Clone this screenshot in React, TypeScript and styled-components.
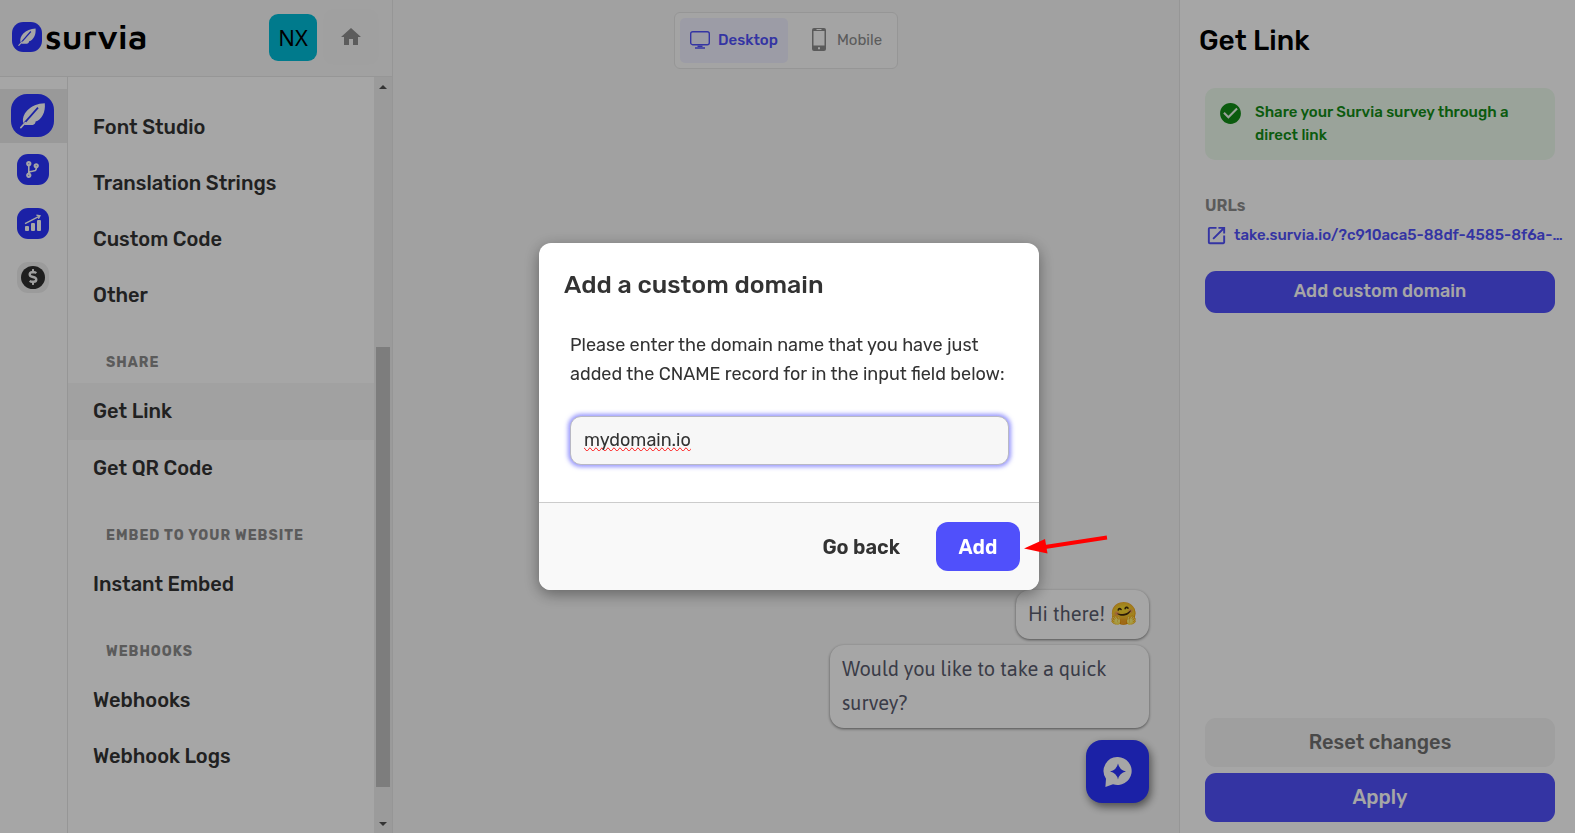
import React from "react";
import styled, { createGlobalStyle } from "styled-components";
import { FaCodeBranch, FaDollarSign } from "react-icons/fa";
import { MdCheckCircle, MdHome, MdOpenInNew } from "react-icons/md";

const GlobalStyle = createGlobalStyle`
  *, *::before, *::after { box-sizing: border-box; }
  body { margin: 0; font-family: Rubik, Roboto, "Noto Sans", sans-serif; color: #333; }
  button, input { font: inherit; color: inherit; }
  button { border: 0; padding: 0; background: none; cursor: pointer; }
  a { color: inherit; text-decoration: none; }
  svg { display: block; flex: none; }
`;

const colors = { brand: "#2a34ff", accent: "#5050fb", line: "#e6e6e6" };

/* ---------- shell ---------- */

const Shell = styled.div`
  display: grid;
  grid-template-columns: 393px minmax(0, 1fr) 396px;
  height: 100vh;
  background: #f8f8f8;
`;

const Sidebar = styled.aside`
  display: flex;
  flex-direction: column;
  min-height: 0;
  border-right: 1px solid ${colors.line};
`;

const SidebarHeader = styled.header`
  display: flex;
  align-items: center;
  height: 77px;
  padding: 0 13px 2px 12px;
  border-bottom: 1px solid ${colors.line};
`;

const Brand = styled.a`
  display: flex;
  align-items: center;
  gap: 3px;
  margin-right: auto;
  color: #000;
`;

const BrandName = styled.span`
  padding-bottom: 3px;
  font: 600 35px/40px "Maven Pro", Roboto, sans-serif;
`;

const Avatar = styled.button`
  width: 48px;
  height: 47px;
  border-radius: 9px;
  background: #00bcd7;
  color: #000;
  font: 400 22px/47px "Noto Sans", sans-serif;
`;

const HomeButton = styled.button`
  display: grid;
  place-items: center;
  width: 56px;
  height: 56px;
  margin-left: 6px;
  border-radius: 10px;
  background: #f6f6f6;
  color: #8e8e8e;
`;

const SidebarBody = styled.div`
  display: flex;
  flex: 1;
  min-height: 0;
  background: #fff;
`;

const Rail = styled.nav`
  width: 68px;
  padding-top: 12px;
  border-right: 1px solid ${colors.line};
`;

const RailItem = styled.button<{ $active?: boolean }>`
  display: grid;
  place-items: center;
  width: 100%;
  height: 54px;
  padding: 0 2px 2px 0;
  background: ${(p) => (p.$active ? "#ebebeb" : "transparent")};
`;

const RailTile = styled.span<{ $muted?: boolean }>`
  display: grid;
  place-items: center;
  width: 32px;
  height: 31px;
  border-radius: 11px;
  background: ${(p) => (p.$muted ? "#efefef" : colors.brand)};
  color: #fff;
`;

const Coin = styled.span`
  display: grid;
  place-items: center;
  width: 24px;
  height: 23px;
  border-radius: 50%;
  background: #303030;
  color: #f4f4f4;
`;

const Menu = styled.nav`
  flex: 1;
  overflow: hidden;
`;

const MenuList = styled.div`
  display: flex;
  flex-direction: column;
  margin-top: -36px;
`;

const MenuItem = styled.a<{ $active?: boolean }>`
  padding: 14px 25px ${(p) => (p.$active ? 15 : 14)}px;
  font-size: 20px;
  font-weight: 500;
  line-height: 28px;
  background: ${(p) => (p.$active ? "#f7f7f7" : "transparent")};

  &:first-child {
    margin-bottom: 2px;
  }
`;

const MenuLabel = styled.h2`
  margin: 0;
  padding: 30px 38px 10px;
  font-size: 14px;
  font-weight: 700;
  line-height: 20px;
  letter-spacing: 1px;
  color: #8c8c8c;
`;

const ScrollTrack = styled.div`
  display: flex;
  flex-direction: column;
  align-items: center;
  width: 18px;
  padding: 8px 0 7px;
  background: #efefef;
  color: #505050;
`;

const ScrollThumb = styled.div`
  width: 14px;
  height: calc(60% - 5px);
  margin: auto 0 35px;
  background: #c1c1c1;
`;

/* ---------- preview ---------- */

const Preview = styled.main`
  display: flex;
  flex-direction: column;
  align-items: center;
  padding: 12px 30px 30px;
`;

const DeviceSwitch = styled.div`
  display: flex;
  padding: 5px;
  border: 1px solid ${colors.line};
  border-radius: 6px;
  background: #fcfcfc;
`;

const DeviceButton = styled.button<{ $active?: boolean }>`
  display: flex;
  align-items: center;
  gap: ${(p) => (p.$active ? 8 : 11)}px;
  height: 45px;
  padding: ${(p) => (p.$active ? "0 10px 2px" : "0 10px 2px 24px")};
  border-radius: 5px;
  background: ${(p) => (p.$active ? "#f0f0ff" : "transparent")};
  color: ${(p) => (p.$active ? colors.accent : "#8c8c8c")};
  font-size: 15px;
  font-weight: ${(p) => (p.$active ? 500 : 400)};
`;

const Chat = styled.section`
  display: flex;
  flex-direction: column;
  align-items: flex-end;
  gap: 6px;
  width: 100%;
  margin-top: auto;
`;

const Bubble = styled.p`
  max-width: 319px;
  margin: 0;
  padding: 7px 12px 8px;
  border-radius: 14px;
  background: #fff;
  box-shadow: 0 1px 3px rgba(0, 0, 0, 0.5);
  color: #5a5c6e;
  font: 400 20px/34px Asap, "Open Sans", "Noto Sans", sans-serif;
`;

const Emoji = styled.span`
  font-size: 22px;
  line-height: 30px;
`;

const ChatLauncher = styled.button`
  display: grid;
  place-items: center;
  width: 63px;
  height: 63px;
  margin-top: 6px;
  border-radius: 16px;
  background: ${colors.brand};
  box-shadow: 2px 4px 8px rgba(0, 0, 0, 0.5);
  color: #fff;
`;

/* ---------- settings panel ---------- */

const Panel = styled.aside`
  display: flex;
  flex-direction: column;
  padding: 23px 20px 11px 25px;
  border-left: 1px solid ${colors.line};
  background: #fff;
`;

const PanelTitle = styled.h1`
  margin: 0 0 29px -6px;
  color: #000;
  font-size: 28px;
  font-weight: 500;
  line-height: 36px;
`;

const Notice = styled.div`
  display: flex;
  gap: 12px;
  padding: 13px;
  border-radius: 10px;
  background: #edfaed;
  color: #128c16;
  font-size: 15px;
  font-weight: 500;
  line-height: 23px;
`;

const PanelLabel = styled.h2`
  margin: 36px 0 6px;
  color: #8c8c8c;
  font-size: 16px;
  font-weight: 600;
  line-height: 20px;
`;

const UrlLink = styled.a`
  display: flex;
  align-items: center;
  gap: 6px;
  margin-bottom: 23px;
  color: ${colors.accent};
  font-size: 15px;
  font-weight: 500;
  line-height: 26px;
  white-space: nowrap;
`;

const PanelButton = styled.button<{ $tone?: "muted"; $compact?: boolean }>`
  height: ${(p) => (p.$compact ? 42 : 49)}px;
  padding-bottom: 2px;
  border-radius: 11px;
  background: ${(p) => (p.$tone === "muted" ? "#f4f4f4" : colors.accent)};
  color: ${(p) => (p.$tone === "muted" ? "#707070" : "#fff")};
  font-size: ${(p) => (p.$compact ? 18 : 20)}px;
  font-weight: 500;
`;

const PanelActions = styled.div`
  display: flex;
  flex-direction: column;
  gap: 6px;
  margin-top: auto;
`;

/* ---------- dialog ---------- */

const Backdrop = styled.div`
  position: fixed;
  inset: 0;
  display: flex;
  align-items: center;
  justify-content: center;
  padding-left: 3px;
  background: rgba(0, 0, 0, 0.35);
`;

const Dialog = styled.form`
  position: relative;
  width: 500px;
  border-radius: 12px;
  background: #fff;
  box-shadow: 0 4px 16px rgba(0, 0, 0, 0.4);
`;

const DialogTitle = styled.h2`
  margin: 0;
  padding: 25px 25px 27px;
  font-size: 25px;
  font-weight: 500;
  line-height: 34px;
`;

const DialogBody = styled.div`
  padding: 2px 30px 37px 31px;
`;

const DialogLabel = styled.label`
  display: block;
  margin-bottom: 27px;
  font-size: 18px;
  line-height: 29px;
`;

const DomainInput = styled.input`
  display: block;
  width: 100%;
  height: 49px;
  padding: 0 13px 2px;
  border: 1px solid #b8b8c4;
  border-radius: 11px;
  outline: 0;
  background: #f7f7f7;
  box-shadow: 0 0 4px 2px rgba(80, 80, 251, 0.6);
  font-size: 18px;
  text-decoration: spelling-error;
`;

const DialogFooter = styled.footer`
  display: flex;
  justify-content: flex-end;
  gap: 14px;
  padding: 19px;
  border-top: 1px solid #ccc;
  border-radius: 0 0 12px 12px;
  background: #f9f9f9;
`;

const DialogButton = styled.button<{ $primary?: boolean }>`
  min-width: 84px;
  height: 49px;
  padding: 0 22px;
  border-radius: 12px;
  background: ${(p) => (p.$primary ? colors.accent : "transparent")};
  color: ${(p) => (p.$primary ? "#fff" : "#333")};
  font-size: 20px;
  font-weight: 600;
`;

const Pointer = styled.svg`
  position: absolute;
  right: -69px;
  bottom: 35px;
`;

/* ---------- drawings ---------- */

function Feather({ size }: { size: number }) {
  return (
    <svg width={size} height={size} viewBox="0 0 43 43" aria-hidden="true">
      <rect width="43" height="43" rx="16" fill={colors.brand} />
      <path
        d="M33.8 9.2C26.5 9.4 20.6 11.8 16.2 16.6C12.7 20.4 11.4 24 12 28.6L13.6 31H21.6C23.6 30.6 24.4 29.2 24.6 27.6C27.4 27 30.2 24.2 31.8 21C33.6 17.6 34.2 13.6 33.8 9.2Z"
        fill="#fff"
      />
      <path d="M27 13.6L12 30.6" stroke={colors.brand} strokeWidth="1.7" />
      <path d="M14.4 28.6L9.8 33.6" stroke="#fff" strokeWidth="1.6" strokeLinecap="round" />
    </svg>
  );
}

const Growth = () => (
  <svg width="18" height="18" viewBox="0 0 18 18" fill="currentColor" aria-hidden="true">
    <rect x="1" y="12" width="4" height="5" rx="1" />
    <rect x="7" y="9" width="4" height="8" rx="1" />
    <rect x="13" y="6" width="4" height="11" rx="1" />
    <path d="M1 9.6L15 2.4M12.4 1.2L16 1.8L14.4 4.8" fill="none" stroke="currentColor" strokeWidth="1.3" />
  </svg>
);

const Monitor = () => (
  <svg width="20" height="18" viewBox="0 0 20 18" fill="none" stroke="currentColor" aria-hidden="true">
    <rect x=".7" y=".7" width="18.6" height="13" rx="2" strokeWidth="1.4" />
    <path d="M7.5 15.2H12.5M5 17H15" strokeWidth="1.6" />
  </svg>
);

const Phone = () => (
  <svg width="14" height="23" viewBox="0 0 14 23" aria-hidden="true">
    <path
      fillRule="evenodd"
      d="M2 0H12A2 2 0 0 1 14 2V21A2 2 0 0 1 12 23H2A2 2 0 0 1 0 21V2A2 2 0 0 1 2 0ZM1.5 3V17.5H12.5V3ZM6 19.2V21.2H8V19.2ZM4.5 1.1V1.9H9.5V1.1Z"
      fill="currentColor"
    />
  </svg>
);

const ChatSpark = () => (
  <svg width="30" height="30" viewBox="0 0 30 30" aria-hidden="true">
    <path d="M15 0A14 14 0 1 1 10 27.2L2.4 30L3 21.8A14 14 0 0 1 15 0Z" fill="currentColor" />
    <path d="M15 6.5Q16.4 13.1 23 14.5Q16.4 15.9 15 22.5Q13.6 15.9 7 14.5Q13.6 13.1 15 6.5Z" fill={colors.brand} />
  </svg>
);

const ScrollArrow = ({ down }: { down?: boolean }) => (
  <svg width="8" height="4" viewBox="0 0 8 4" aria-hidden="true">
    <path d={down ? "M0 0H8L4 4Z" : "M0 4H8L4 0Z"} fill="currentColor" />
  </svg>
);

/* ---------- data ---------- */

const menu: { label?: string; items: string[] }[] = [
  { items: ["Color Studio", "Font Studio", "Translation Strings", "Custom Code", "Other"] },
  { label: "SHARE", items: ["Get Link", "Get QR Code"] },
  { label: "EMBED TO YOUR WEBSITE", items: ["Instant Embed"] },
  { label: "WEBHOOKS", items: ["Webhooks", "Webhook Logs"] },
];

export default function App() {
  return (
    <>
      <GlobalStyle />
      <Shell>
        <Sidebar>
          <SidebarHeader>
            <Brand href="#">
              <Feather size={30} />
              <BrandName>survia</BrandName>
            </Brand>
            <Avatar type="button">NX</Avatar>
            <HomeButton type="button" aria-label="Home">
              <MdHome size={24} />
            </HomeButton>
          </SidebarHeader>
          <SidebarBody>
            <Rail>
              <RailItem type="button" $active aria-label="Design">
                <Feather size={43} />
              </RailItem>
              <RailItem type="button" aria-label="Logic">
                <RailTile>
                  <FaCodeBranch size={17} />
                </RailTile>
              </RailItem>
              <RailItem type="button" aria-label="Analytics">
                <RailTile>
                  <Growth />
                </RailTile>
              </RailItem>
              <RailItem type="button" aria-label="Billing">
                <RailTile $muted>
                  <Coin>
                    <FaDollarSign size={16} />
                  </Coin>
                </RailTile>
              </RailItem>
            </Rail>
            <Menu>
              <MenuList>
                {menu.map((group, i) => (
                  <React.Fragment key={i}>
                    {group.label && <MenuLabel>{group.label}</MenuLabel>}
                    {group.items.map((item) => (
                      <MenuItem key={item} href="#" $active={item === "Get Link"}>
                        {item}
                      </MenuItem>
                    ))}
                  </React.Fragment>
                ))}
              </MenuList>
            </Menu>
            <ScrollTrack>
              <ScrollArrow />
              <ScrollThumb />
              <ScrollArrow down />
            </ScrollTrack>
          </SidebarBody>
        </Sidebar>

        <Preview>
          <DeviceSwitch>
            <DeviceButton type="button" $active>
              <Monitor />
              Desktop
            </DeviceButton>
            <DeviceButton type="button">
              <Phone />
              Mobile
            </DeviceButton>
          </DeviceSwitch>
          <Chat>
            <Bubble>
              Hi there! <Emoji>🤗</Emoji>
            </Bubble>
            <Bubble>Would you like to take a quick survey?</Bubble>
            <ChatLauncher type="button" aria-label="Open chat">
              <ChatSpark />
            </ChatLauncher>
          </Chat>
        </Preview>

        <Panel>
          <PanelTitle>Get Link</PanelTitle>
          <Notice>
            <MdCheckCircle size={25} />
            <span>Share your Survia survey through a direct link</span>
          </Notice>
          <PanelLabel>URLs</PanelLabel>
          <UrlLink href="#">
            <MdOpenInNew size={23} />
            take.survia.io/?c910aca5-88df-4585-8f6a-…
          </UrlLink>
          <PanelButton type="button" $compact>
            Add custom domain
          </PanelButton>
          <PanelActions>
            <PanelButton type="button" $tone="muted">
              Reset changes
            </PanelButton>
            <PanelButton type="button">Apply</PanelButton>
          </PanelActions>
        </Panel>
      </Shell>

      <Backdrop>
        <Dialog role="dialog" aria-labelledby="dialog-title" onSubmit={(e) => e.preventDefault()}>
          <DialogTitle id="dialog-title">Add a custom domain</DialogTitle>
          <DialogBody>
            <DialogLabel htmlFor="domain">
              Please enter the domain name that you have just added the CNAME record for in the input field below:
            </DialogLabel>
            <DomainInput id="domain" type="text" defaultValue="mydomain.io" spellCheck={false} />
          </DialogBody>
          <DialogFooter>
            <DialogButton type="button">Go back</DialogButton>
            <DialogButton type="submit" $primary>
              Add
            </DialogButton>
          </DialogFooter>
          <Pointer width="84" height="20" viewBox="0 0 84 20" aria-hidden="true">
            <path d="M21 12L83 2.5" stroke="#f00" strokeWidth="4" />
            <path d="M0 13.5L21 4L23.5 18.5Z" fill="#f00" />
          </Pointer>
        </Dialog>
      </Backdrop>
    </>
  );
}
